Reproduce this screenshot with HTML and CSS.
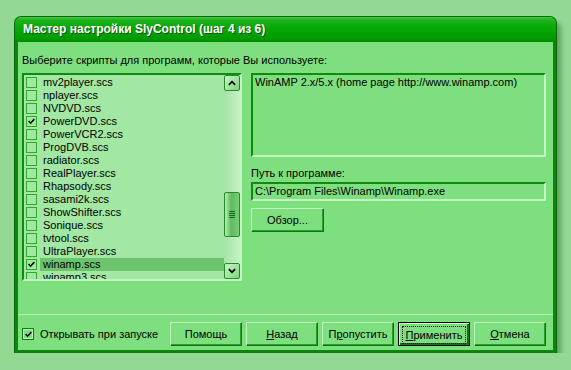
FILE: index.html
```html
<!DOCTYPE html>
<html lang="ru">
<head>
  <meta charset="UTF-8" />
  <title>Мастер настройки SlyControl</title>
  <link rel="stylesheet" href="styles.css">
</head>
<body>
  <div class="window">
    <div class="titlebar">Мастер настройки SlyControl (шаг 4 из 6)</div>
    <div class="content">
      <div class="prompt">Выберите скрипты для программ, которые Вы используете:</div>
      <div class="main">
        <div class="listbox">
          <ul class="items">
            <li><span class="box"></span><span class="name">mv2player.scs</span></li>
            <li><span class="box"></span><span class="name">nplayer.scs</span></li>
            <li><span class="box"></span><span class="name">NVDVD.scs</span></li>
            <li><span class="box on"><svg viewBox="0 0 11 11"><path d="M2 5 L4.3 7.6 L9 2.6"/></svg></span><span class="name">PowerDVD.scs</span></li>
            <li><span class="box"></span><span class="name">PowerVCR2.scs</span></li>
            <li><span class="box"></span><span class="name">ProgDVB.scs</span></li>
            <li><span class="box"></span><span class="name">radiator.scs</span></li>
            <li><span class="box"></span><span class="name">RealPlayer.scs</span></li>
            <li><span class="box"></span><span class="name">Rhapsody.scs</span></li>
            <li><span class="box"></span><span class="name">sasami2k.scs</span></li>
            <li><span class="box"></span><span class="name">ShowShifter.scs</span></li>
            <li><span class="box"></span><span class="name">Sonique.scs</span></li>
            <li><span class="box"></span><span class="name">tvtool.scs</span></li>
            <li><span class="box"></span><span class="name">UltraPlayer.scs</span></li>
            <li class="selected"><span class="box on"><svg viewBox="0 0 11 11"><path d="M2 5 L4.3 7.6 L9 2.6"/></svg></span><span class="name">winamp.scs</span></li>
            <li><span class="box"></span><span class="name">winamp3.scs</span></li>
          </ul>
          <div class="scrollbar">
            <div class="arrow"><svg viewBox="0 0 9 6"><path d="M1 5 L4.5 1.5 L8 5"/></svg></div>
            <div class="track">
              <div class="thumb"><span></span><span></span><span></span><span></span></div>
            </div>
            <div class="arrow"><svg viewBox="0 0 9 6"><path d="M1 1 L4.5 4.5 L8 1"/></svg></div>
          </div>
        </div>
        <div class="details">
          <div class="desc">WinAMP 2.x/5.x (home page http://www.winamp.com)</div>
          <div class="path-label">Путь к программе:</div>
          <div class="path">C:\Program Files\Winamp\Winamp.exe</div>
          <button class="btn browse">Обзор...</button>
        </div>
      </div>
      <div class="footer">
        <label class="startup"><span class="box on big"><svg viewBox="0 0 11 11"><path d="M2 5 L4.3 7.6 L9 2.6"/></svg></span>Открывать при запуске</label>
        <div class="buttons">
          <button class="btn">Помощь</button>
          <button class="btn"><u>Н</u>азад</button>
          <button class="btn">П<u>р</u>опустить</button>
          <button class="btn default"><span class="focus"><u>П</u>рименить</span></button>
          <button class="btn"><u>О</u>тмена</button>
        </div>
      </div>
    </div>
  </div>
</body>
</html>
```

FILE: styles.css
```css
body {
  margin: 0;
  background: #93d993;
  font-family: "Liberation Sans", Arial, sans-serif;
  font-size: 11px;
  color: #000;
}
.window {
  margin: 17px 0 0 15px;
  width: 535px;
  height: 333px;
  background: #7ddf7d;
  border: 3px solid #0b860b;
  border-top: 0;
  border-radius: 6px 6px 0 0;
  box-shadow: 0 0 0 1px #076807, 5px 5px 5px rgba(0, 60, 0, 0.35);
  display: flex;
  flex-direction: column;
}
.titlebar {
  height: 25px;
  margin: 0 -3px;
  padding-left: 8px;
  border-radius: 6px 6px 0 0;
  background: linear-gradient(#46c846 0, #1db21d 3px, #05a805 45%, #009c00 85%, #008a00 100%);
  color: #fff;
  font-weight: bold;
  font-size: 12px;
  line-height: 25px;
  text-shadow: 1px 1px 0 #0a5a0a;
  white-space: nowrap;
}
.content {
  flex: 1;
  display: flex;
  flex-direction: column;
}
.prompt {
  padding: 12px 0 0 4px;
  line-height: 13px;
  margin-bottom: 6px;
}
.main {
  display: flex;
  gap: 9px;
  padding-left: 4px;
}
.listbox {
  width: 216px;
  height: 204px;
  border: 2px solid;
  border-color: #118a11 #c4f3c4 #c4f3c4 #118a11;
  background: #a2e8a2;
  display: flex;
  overflow: hidden;
}
.items {
  list-style: none;
  margin: 0;
  padding: 1px 0 0 0;
  flex: 1;
}
.items li {
  height: 13px;
  line-height: 13px;
  display: flex;
  align-items: center;
}
.box {
  width: 9px;
  height: 9px;
  border: 1px solid #2fa82f;
  margin: 0 3px 0 2px;
  flex: none;
  display: flex;
}
.box svg {
  width: 9px;
  height: 9px;
}
.box path {
  fill: none;
  stroke: #000;
  stroke-width: 1.8;
}
.name {
  flex: 1;
  padding-left: 3px;
}
.selected .name {
  background: #6cc46c;
}
.scrollbar {
  width: 16px;
  display: flex;
  flex-direction: column;
  background: linear-gradient(90deg, #a6e2a6, #c6f2c6);
}
.arrow {
  height: 14px;
  border: 1px solid #2a8a2a;
  border-radius: 2px;
  background: linear-gradient(135deg, #c8f4c8, #7fd57f);
  display: flex;
  align-items: center;
  justify-content: center;
}
.arrow svg {
  width: 8px;
  height: 6px;
}
.arrow path {
  fill: none;
  stroke: #000;
  stroke-width: 2;
}
.track {
  flex: 1;
  position: relative;
}
.thumb {
  position: absolute;
  left: 0;
  right: 0;
  top: 101px;
  height: 45px;
  border: 1px solid #2a8a2a;
  border-radius: 2px;
  box-sizing: border-box;
  background: linear-gradient(90deg, #b4ecb4, #5cbc5c 45%, #78cf78);
  display: flex;
  flex-direction: column;
  align-items: center;
  justify-content: center;
  gap: 1px;
}
.thumb span {
  width: 6px;
  height: 1px;
  background: #1b6a1b;
}
.details {
  width: 295px;
}
.desc {
  padding: 1px 2px;
  border: 2px solid;
  border-color: #118a11 #c4f3c4 #c4f3c4 #118a11;
  line-height: 13px;
  height: 78px;
}
.path-label {
  margin-top: 10px;
  line-height: 13px;
}
.path {
  margin-top: 2px;
  height: 15px;
  padding: 0 2px;
  border: 2px solid;
  border-color: #118a11 #c4f3c4 #c4f3c4 #118a11;
  line-height: 15px;
}
.btn {
  width: 72px;
  height: 24px;
  padding: 0;
  font: inherit;
  color: #000;
  background: #7ddf7d;
  border: 1px solid;
  border-color: #c4f3c4 #0b780b #0b780b #c4f3c4;
  box-shadow: inset -1px -1px 0 #2c9d2c;
}
.browse {
  width: 73px;
  margin-top: 7px;
}
.footer {
  margin-top: auto;
  border-top: 1px solid #b8efb8;
  padding: 7px 7px 4px 4px;
  display: flex;
  align-items: center;
}
.startup {
  display: flex;
  align-items: center;
  flex: 1;
}
.startup .box {
  width: 10px;
  height: 10px;
  margin: 0 6px 0 0;
  border: 1px solid #0f7a0f;
  box-shadow: inset 0 0 0 1px #c4f3c4;
  align-items: center;
  justify-content: center;
}
.buttons {
  display: flex;
  gap: 4px;
}
.default {
  border: 1px solid #000;
  box-shadow: inset 1px 1px 0 #c4f3c4, inset -2px -2px 0 #0b780b;
  padding: 3px;
}
.focus {
  display: block;
  height: 16px;
  line-height: 16px;
  border: 1px dotted #000;
}
```
